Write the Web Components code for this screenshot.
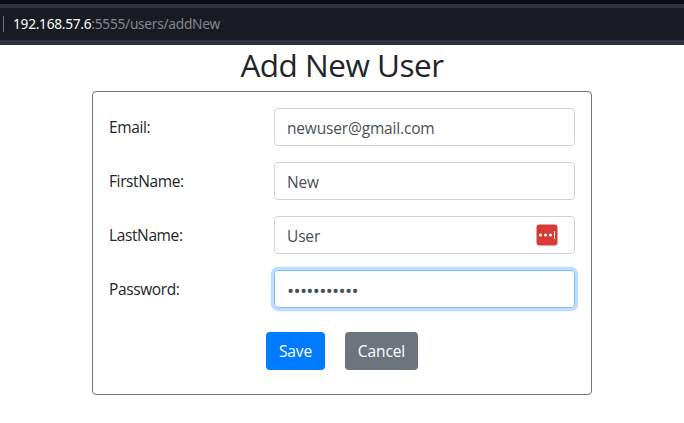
<!DOCTYPE html>
<html lang="en">
<head>
<meta charset="utf-8">
<title>Add New User</title>
<style>
html,body{margin:0;height:100%;background:#fff;overflow:hidden}
body{font:400 15.5px/24px "Open Sans","Noto Sans",sans-serif;color:#212529}
</style>
</head>
<body>
<add-user-page></add-user-page>
<script>
function define(name, html) {
  const t = document.createElement('template');
  t.innerHTML = html;
  customElements.define(name, class extends HTMLElement {
    constructor() {
      super();
      this.attachShadow({mode: 'open'}).append(t.content.cloneNode(true));
    }
  });
}
define('address-bar', `<style>
:host{display:block;box-sizing:border-box;height:45px;background:#31333f;border-top:4px solid #0c0c16;padding:4px 0 5px}
.field{display:flex;align-items:center;height:32px;background:#191b22;font:13.7px/20px "Noto Sans",sans-serif;color:#85868b}
i{width:1px;height:16px;background:#74757a;margin:0 9px 0 3px}
span{white-space:nowrap;letter-spacing:-.26px}
b{font-weight:400;color:#fbfbfe}
</style><div class="field"><i></i><span><b><slot name="host"></slot></b><slot></slot></span></div>`);
define('form-card', `<style>
:host{display:block;box-sizing:border-box;width:500px;height:304px;border:1px solid #6c757d;border-radius:4px;padding:16px}
</style><slot></slot>`);
define('form-row', `<style>
:host{display:grid;grid-template-columns:165px 301px;height:38px;margin-bottom:16px}
.label{padding-top:7px;white-space:nowrap;letter-spacing:-.38px}
</style><div class="label"><slot name="label"></slot></div><slot></slot>`);
define('text-field', `<style>
:host{display:flex;align-items:center;justify-content:space-between;box-sizing:border-box;height:38px;border:1px solid #ced4da;border-radius:4px;padding:2px 16px 0 12px;color:#495057;white-space:nowrap;letter-spacing:-.17px}
:host([focused]){border-color:#80bdff;box-shadow:0 0 0 3.2px rgba(0,123,255,.25)}
</style><span><slot></slot></span><slot name="icon"></slot>`);
define('vault-icon', `<style>:host{display:block;width:22px;height:22px;margin-top:-2px}svg{display:block}</style>
<svg width="22" height="22" viewBox="0 0 22 22"><rect x=".5" y=".5" width="21" height="21" rx="3" fill="#d63b38"/><g fill="#fff"><circle cx="4.5" cy="11" r="1.5"/><circle cx="9.5" cy="11" r="1.5"/><circle cx="14.5" cy="11" r="1.5"/><rect x="18" y="7" width="1" height="8"/></g></svg>`);
define('push-button', `<style>
:host{display:flex;align-items:center;justify-content:center;box-sizing:border-box;width:var(--w);height:38px;border-radius:4px;background:#6c757d;color:#fff;white-space:nowrap;letter-spacing:-.1px}
:host([primary]){background:#007bff}
</style><slot></slot>`);
define('add-user-page', `<style>
:host{display:block}
main{display:flex;flex-direction:column;align-items:center}
h1{margin:0;height:46px;font-weight:400;font-size:31.5px;line-height:40px;letter-spacing:-.5px;white-space:nowrap}
.actions{display:flex;justify-content:center;gap:20px;margin-top:24px}
.dots{display:block;padding-top:2px;font-size:19px;letter-spacing:-.7px}
</style>
<address-bar><span slot="host">192.168.57.6</span>:5555/users/addNew</address-bar>
<main><h1>Add New User</h1>
<form-card>
<form-row><span slot="label">Email:</span><text-field>newuser@gmail.com</text-field></form-row>
<form-row><span slot="label">FirstName:</span><text-field>New</text-field></form-row>
<form-row><span slot="label">LastName:</span><text-field>User<vault-icon slot="icon"></vault-icon></text-field></form-row>
<form-row><span slot="label">Password:</span><text-field focused><span class="dots">•••••••••••</span></text-field></form-row>
<div class="actions"><push-button primary style="--w:59px">Save</push-button><push-button style="--w:73px">Cancel</push-button></div>
</form-card></main>`);
</script>
</body>
</html>
